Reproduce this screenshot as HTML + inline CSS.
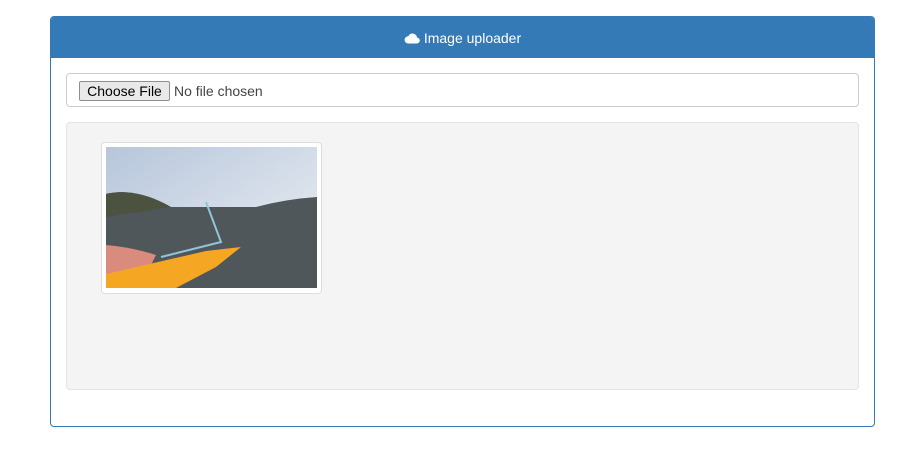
<!DOCTYPE html>
<html><head><style>
body{margin:0;background:#fff;font-family:"Liberation Sans",Arial,sans-serif;}
.panel{position:absolute;left:50px;top:16px;width:823px;height:409px;border:1px solid #337ab7;border-radius:4px;overflow:hidden;}
.head{height:41px;background:#337ab7;color:#fff;font-size:14px;display:flex;align-items:center;justify-content:center;gap:4px;}
.inp{position:absolute;left:15px;top:56px;width:791px;height:32px;border:1px solid #ccc;border-radius:4px;}
.btn{position:absolute;left:12px;top:7px;height:20px;width:91px;box-sizing:border-box;border:1px solid #8f8f8f;background:#e9e9e9;border-radius:2px;font-size:14px;line-height:18px;text-align:center;color:#000;}
.nf{position:absolute;left:107px;top:9px;font-size:14px;color:#444;}
.well{position:absolute;left:15px;top:105px;width:791px;height:266px;background:#f4f4f4;border:1px solid #e3e3e3;border-radius:4px;}
.th{position:absolute;left:34px;top:19px;width:219px;height:150px;background:#fff;border:1px solid #ddd;border-radius:4px;}
.th svg{position:absolute;left:4px;top:4px;}
</style></head><body>
<div class="panel">
<div class="head"><svg width="16" height="12" viewBox="0 0 16 12"><path d="M4 11.5h8.5a3 3 0 0 0 .5-6 4.5 4.5 0 0 0-8.6-1.2A3.6 3.6 0 0 0 4 11.5z" fill="#fff"/></svg>Image uploader</div>
<div class="inp"><div class="btn">Choose File</div><div class="nf">No file chosen</div></div>
<div class="well"><div class="th">
<svg width="211" height="141" viewBox="0 0 211 141">
<defs><linearGradient id="s" x1="0" y1="0" x2="1" y2="1"><stop offset="0" stop-color="#b7c6dc"/><stop offset="1" stop-color="#eef1f4"/></linearGradient></defs>
<rect width="211" height="141" fill="url(#s)"/>
<path d="M0 47 Q30 40 65 60 L150 60 Q180 52 211 50 L211 141 L0 141Z" fill="#50575b"/>
<path d="M0 47 Q30 40 65 60 L0 70Z" fill="#4b5240"/>
<path d="M0 98 Q25 100 50 108 L40 128 L0 130Z" fill="#d98b7e"/>
<path d="M0 127 L100 104 L135 100 L110 120 L70 141 L0 141Z" fill="#f5a623"/>
<path d="M55 110 L115 95 L100 55" stroke="#8fc6d8" stroke-width="2" fill="none"/>
</svg></div></div>
</div>
</body></html>
